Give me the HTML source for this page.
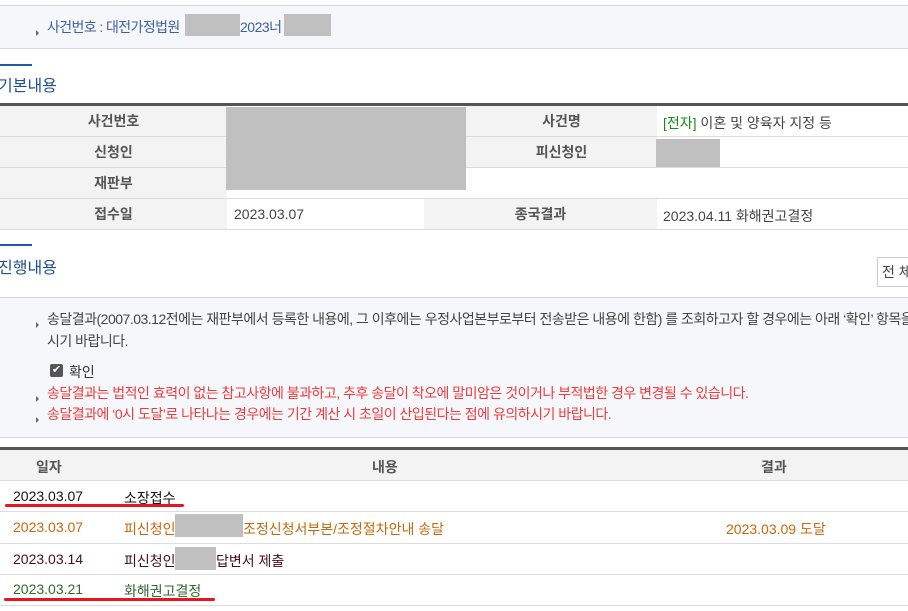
<!DOCTYPE html>
<html><head><meta charset="utf-8"><style>
*{margin:0;padding:0;box-sizing:border-box}
body{width:908px;height:611px;overflow:hidden;background:#fff;font-family:"Liberation Sans","Noto Sans CJK KR",sans-serif;font-size:14px;color:#444;position:relative}
.a{position:absolute;white-space:nowrap}
.g{position:absolute;background:#c0c0c0}
.hl{position:absolute;left:0;width:908px;height:1px;background:#dcdcdc}
.lab{position:absolute;background:#f3f3f3;font-weight:bold;color:#555;text-align:center;line-height:30px}
.tri{display:inline-block;width:0;height:0;border-left:3px solid #666;border-top:3px solid transparent;border-bottom:3px solid transparent;margin-right:8px;vertical-align:-4px}
.ul{position:absolute;height:3px;background:#e8141e;border-radius:2px}
.n{letter-spacing:-0.5px}
</style></head><body>
<div class="a" style="left:0;top:5px;width:908px;height:44px;background:#f6f7fb;border-top:1px solid #d4d6df;border-bottom:1px solid #d4d6df"></div>
<div class="a" style="left:36px;top:17px;color:#3d5fa6;font-size:14px;letter-spacing:-0.6px"><span class="tri"></span>사건번호 : 대전가정법원</div>
<div class="g" style="left:185px;top:14px;width:55px;height:22px"></div>
<div class="a" style="left:240px;top:17px;color:#3d5fa6;letter-spacing:-0.5px">2023너</div>
<div class="g" style="left:284px;top:14px;width:47px;height:22px"></div>

<div class="a" style="left:0;top:64px;width:32px;height:2px;background:#1f5aa8"></div>
<div class="a" style="left:-2px;top:72px;font-size:16px;color:#1f4f92">기본내용</div>

<div class="a" style="left:0;top:103px;width:908px;height:3px;background:#555"></div>
<div class="lab" style="left:0;top:106px;width:227px;height:30px">사건번호</div>
<div class="lab" style="left:0;top:137px;width:227px;height:30px">신청인</div>
<div class="lab" style="left:0;top:168px;width:227px;height:30px">재판부</div>
<div class="lab" style="left:0;top:199px;width:227px;height:30px">접수일</div>
<div class="lab" style="left:466px;top:106px;width:191px;height:30px">사건명</div>
<div class="lab" style="left:466px;top:137px;width:191px;height:30px">피신청인</div>
<div class="lab" style="left:424px;top:199px;width:233px;height:30px">종국결과</div>
<div class="hl" style="top:136px"></div>
<div class="hl" style="top:167px"></div>
<div class="hl" style="top:198px"></div>
<div class="hl" style="top:229px"></div>
<div class="g" style="left:226px;top:107px;width:240px;height:83px"></div>
<div class="g" style="left:656px;top:139px;width:64px;height:28px"></div>
<div class="a" style="left:663px;top:113px;color:#444"><span style="color:#1a8a1a">[전자]</span> 이혼 및 양육자 지정 등</div>
<div class="a" style="left:234px;top:206px">2023.03.07</div>
<div class="a" style="left:663px;top:206px">2023.04.11 화해권고결정</div>

<div class="a" style="left:0;top:244px;width:32px;height:2px;background:#1f5aa8"></div>
<div class="a" style="left:-2px;top:254px;font-size:16px;color:#1f4f92">진행내용</div>
<div class="a" style="left:877px;top:257px;width:31px;height:30px;border:1px solid #ccc;border-right:none;background:#fff;line-height:28px;padding-left:4px;color:#444;overflow:hidden">전 체</div>

<div class="a" style="left:0;top:297px;width:908px;height:141px;background:#f6f7fb;border-top:1px solid #d4d6df;border-bottom:1px solid #d4d6df"></div>
<div class="a n" style="left:36px;top:309px;color:#444;width:872px;overflow:hidden"><span class="tri"></span>송달결과(2007.03.12전에는 재판부에서 등록한 내용에, 그 이후에는 우정사업본부로부터 전송받은 내용에 한함) 를 조회하고자 할 경우에는 아래 ‘확인’ 항목을</div>
<div class="a n" style="left:47px;top:331px;color:#444">시기 바랍니다.</div>
<div class="a" style="left:50px;top:364px;width:13px;height:13px;background:#555;border-radius:2px;color:#fff;font-size:11px;line-height:13px;text-align:center">✔</div>
<div class="a" style="left:69px;top:362px;color:#333">확인</div>
<div class="a n" style="left:36px;top:383px;color:#ee3b3b"><span class="tri"></span>송달결과는 법적인 효력이 없는 참고사항에 불과하고, 추후 송달이 착오에 말미암은 것이거나 부적법한 경우 변경될 수 있습니다.</div>
<div class="a n" style="left:36px;top:404px;color:#ee3b3b"><span class="tri"></span>송달결과에 ‘0시 도달’로 나타나는 경우에는 기간 계산 시 초일이 산입된다는 점에 유의하시기 바랍니다.</div>

<div class="a" style="left:0;top:447px;width:908px;height:3px;background:#555"></div>
<div class="a" style="left:0;top:450px;width:908px;height:30px;background:#f3f3f3"></div>
<div class="a" style="left:36px;top:457px;font-weight:bold;color:#555">일자</div>
<div class="a" style="left:372px;top:457px;font-weight:bold;color:#555">내용</div>
<div class="a" style="left:761px;top:457px;font-weight:bold;color:#555">결과</div>
<div class="hl" style="top:480px"></div>
<div class="hl" style="top:511px"></div>
<div class="hl" style="top:543px"></div>
<div class="hl" style="top:574px"></div>
<div class="hl" style="top:605px"></div>

<div class="a" style="left:13px;top:488px;color:#111">2023.03.07</div>
<div class="a" style="left:124px;top:488px;color:#111">소장접수</div>
<div class="ul" style="left:5px;top:504px;width:179px"></div>

<div class="a" style="left:13px;top:519px;color:#c8680c">2023.03.07</div>
<div class="a" style="left:124px;top:519px;color:#c8680c">피신청인</div>
<div class="g" style="left:175px;top:514px;width:68px;height:23px"></div>
<div class="a" style="left:243px;top:519px;color:#c8680c">조정신청서부본/조정절차안내 송달</div>
<div class="a" style="left:726px;top:519px;color:#c8680c">2023.03.09 도달</div>

<div class="a" style="left:13px;top:551px;color:#4a0d14">2023.03.14</div>
<div class="a" style="left:124px;top:551px;color:#4a0d14">피신청인</div>
<div class="g" style="left:175px;top:547px;width:41px;height:23px"></div>
<div class="a" style="left:216px;top:551px;color:#4a0d14">답변서 제출</div>

<div class="a" style="left:13px;top:581px;color:#2d6a2d">2023.03.21</div>
<div class="a" style="left:124px;top:581px;color:#2d6a2d">화해권고결정</div>
<div class="ul" style="left:4px;top:598px;width:211px"></div>
</body></html>
